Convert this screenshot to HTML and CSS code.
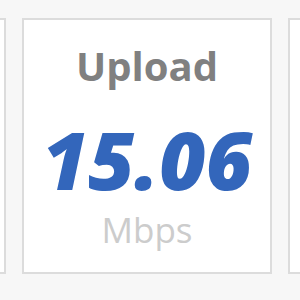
FILE: index.html
```html
<!DOCTYPE html>
<html>
<head>
<meta charset="utf-8">
<link rel="stylesheet" href="styles.css">
</head>
<body>
<div class="row">
  <div class="card card-side"></div>
  <div class="card">
    <div class="label">Upload</div>
    <div class="value">15.06</div>
    <div class="unit">Mbps</div>
  </div>
  <div class="card card-side"></div>
</div>
</body>
</html>
```
FILE: styles.css
```css
html, body {
  margin: 0;
  padding: 0;
  width: 300px;
  height: 300px;
  overflow: hidden;
  background: #f7f7f7;
  font-family: "Open Sans", "Liberation Sans", sans-serif;
}
.row {
  display: flex;
  gap: 16px;
  margin-left: -244px;
  padding-top: 18px;
}
.card {
  flex: 0 0 250px;
  box-sizing: border-box;
  height: 256px;
  background: #fff;
  border: 2px solid #dcdcdc;
  display: flex;
  flex-direction: column;
  align-items: center;
  padding-top: 26px;
}
.label {
  font-size: 40px;
  line-height: 40px;
  font-weight: 700;
  color: #808080;
}
.value {
  margin-top: 33px;
  font-size: 80px;
  line-height: 80px;
  font-weight: 800;
  font-style: italic;
  color: #3366bb;
}
.unit {
  margin-top: 13px;
  font-size: 35px;
  line-height: 35px;
  font-weight: 400;
  color: #cccccc;
}
```
